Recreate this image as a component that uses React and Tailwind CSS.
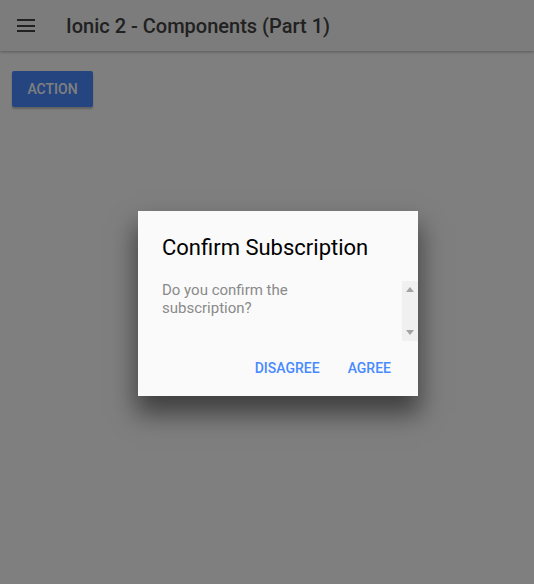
export default function App() {
  return (
    <div className="relative h-[584px] w-[534px] bg-white" style={{ fontFamily: "Roboto, 'Noto Sans', sans-serif" }}>
      <div className="flex h-[51px] items-center bg-[#f8f8f8] shadow-[0_1px_3px_rgba(0,0,0,0.3)]">
        <div className="ml-[17px] flex w-[18px] flex-col gap-[3.5px]">
          <div className="h-[2px] bg-[#424242]"></div>
          <div className="h-[2px] bg-[#424242]"></div>
          <div className="h-[2px] bg-[#424242]"></div>
        </div>
        <div className="ml-[31px] text-[20px] font-medium text-[#424242]">Ionic 2 - Components (Part 1)</div>
      </div>
      <div className="px-3 pt-5">
        <button className="h-[36px] w-[81px] rounded-[2px] bg-[#488aff] text-[14px] font-medium text-white shadow-[0_2px_2px_rgba(0,0,0,0.24)]">
          ACTION
        </button>
      </div>
      <div className="absolute inset-0 bg-[rgba(0,0,0,0.5)] pl-[138px] pt-[211px]">
        <div className="flex h-[185px] w-[280px] flex-col bg-[#fafafa] shadow-[0_16px_24px_2px_rgba(0,0,0,0.5)]">
          <div className="px-6 pt-[23px] text-[22px] leading-[28px] text-black">Confirm Subscription</div>
          <div className="mt-[19px] flex h-[60px]">
            <div className="flex-1 pl-6 text-[15px] leading-[18px] text-[#8a8a8a]">
              Do you confirm the
              <br />
              subscription?
            </div>
            <div className="flex w-[16px] flex-col items-center justify-between bg-[#f0f0f0] py-[6px]">
              <svg width="8" height="5" viewBox="0 0 8 5"><path d="M0 5 L4 0 L8 5 Z" fill="#a3a3a3" /></svg>
              <svg width="8" height="5" viewBox="0 0 8 5"><path d="M0 0 L8 0 L4 5 Z" fill="#a3a3a3" /></svg>
            </div>
          </div>
          <div className="mt-[17px] flex justify-end gap-[28px] pr-[27px] text-[14px] font-medium text-[#488aff]">
            <span>DISAGREE</span>
            <span>AGREE</span>
          </div>
        </div>
      </div>
    </div>
  );
}
